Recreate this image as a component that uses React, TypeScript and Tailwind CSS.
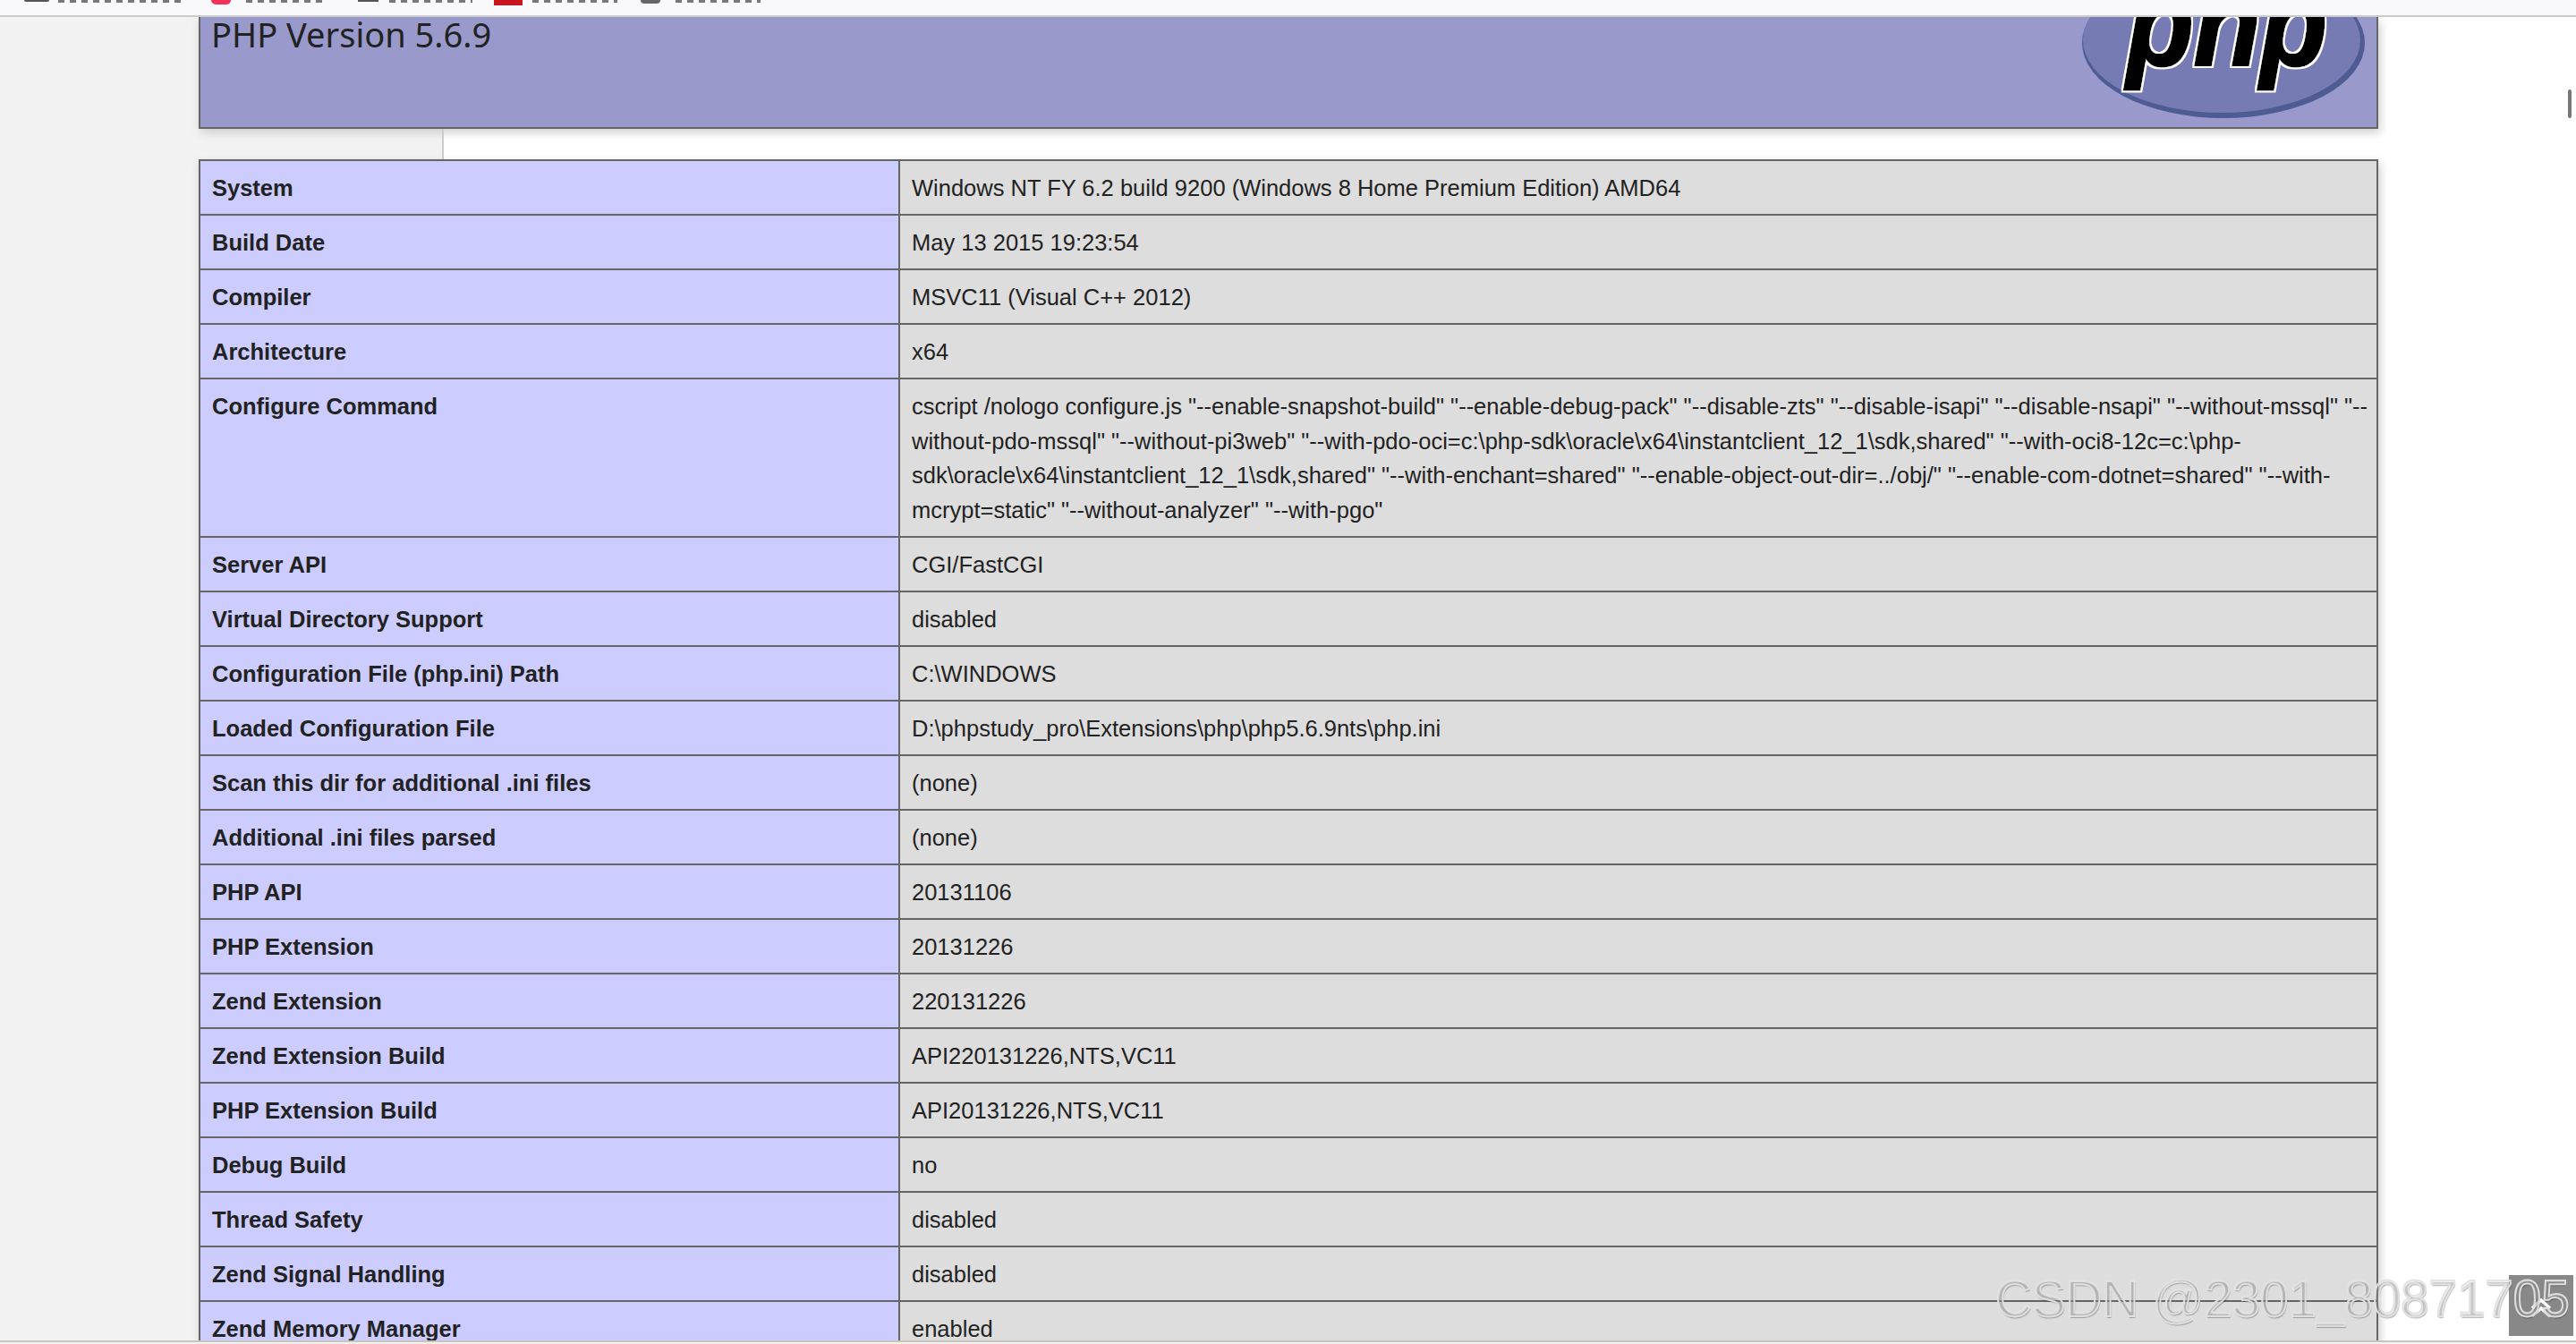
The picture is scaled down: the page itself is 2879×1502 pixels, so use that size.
const rows: [string, string][] = [
  ['System', 'Windows NT FY 6.2 build 9200 (Windows 8 Home Premium Edition) AMD64'],
  ['Build Date', 'May 13 2015 19:23:54'],
  ['Compiler', 'MSVC11 (Visual C++ 2012)'],
  ['Architecture', 'x64'],
  [
    'Configure Command',
    'cscript /nologo configure.js "--enable-snapshot-build" "--enable-debug-pack" "--disable-zts" "--disable-isapi" "--disable-nsapi" "--without-mssql" "--without-pdo-mssql" "--without-pi3web" "--with-pdo-oci=c:\\php-sdk\\oracle\\x64\\instantclient_12_1\\sdk,shared" "--with-oci8-12c=c:\\php-sdk\\oracle\\x64\\instantclient_12_1\\sdk,shared" "--with-enchant=shared" "--enable-object-out-dir=../obj/" "--enable-com-dotnet=shared" "--with-mcrypt=static" "--without-analyzer" "--with-pgo"',
  ],
  ['Server API', 'CGI/FastCGI'],
  ['Virtual Directory Support', 'disabled'],
  ['Configuration File (php.ini) Path', 'C:\\WINDOWS'],
  ['Loaded Configuration File', 'D:\\phpstudy_pro\\Extensions\\php\\php5.6.9nts\\php.ini'],
  ['Scan this dir for additional .ini files', '(none)'],
  ['Additional .ini files parsed', '(none)'],
  ['PHP API', '20131106'],
  ['PHP Extension', '20131226'],
  ['Zend Extension', '220131226'],
  ['Zend Extension Build', 'API220131226,NTS,VC11'],
  ['PHP Extension Build', 'API20131226,NTS,VC11'],
  ['Debug Build', 'no'],
  ['Thread Safety', 'disabled'],
  ['Zend Signal Handling', 'disabled'],
  ['Zend Memory Manager', 'enabled'],
]

function PhpLogo() {
  return (
    <svg className="absolute right-[13px] top-[-55px]" width="316" height="168" viewBox="0 0 316 168">
      <defs>
        <filter id="php-outline" x="-10%" y="-10%" width="120%" height="120%">
          <feMorphology in="SourceAlpha" operator="dilate" radius="2" result="grown" />
          <feFlood floodColor="#fff" />
          <feComposite in2="grown" operator="in" result="edge" />
          <feMerge>
            <feMergeNode in="edge" />
            <feMergeNode in="SourceGraphic" />
          </feMerge>
        </filter>
      </defs>
      <ellipse cx="158" cy="84" rx="158" ry="84" fill="#4f5b93" />
      <ellipse cx="156" cy="81" rx="155" ry="81" fill="#777bb3" />
      <text
        x="50"
        y="109"
        textLength="224"
        lengthAdjust="spacingAndGlyphs"
        fontFamily="'Liberation Sans', sans-serif"
        fontSize="132"
        fontWeight="700"
        fontStyle="italic"
        fill="#000"
        stroke="#000"
        strokeWidth="3"
        filter="url(#php-outline)"
      >
        php
      </text>
    </svg>
  )
}

// bottom edge of the bookmark bar, the rest is cropped out of the window
function BookmarkBar() {
  const fragment =
    'h-[3px] bg-[repeating-linear-gradient(90deg,#777_0,#777_7px,transparent_7px,transparent_13px)]'
  return (
    <div className="flex h-[19px] shrink-0 items-start border-b-2 border-[#ccc] bg-[#f9f9fb]">
      <div className="ml-[27px] h-[2px] w-[28px] rounded-b-sm bg-[#555]" />
      <div className={`ml-[10px] w-[143px] ${fragment}`} />
      <div className="ml-[28px] h-[5px] w-[22px] rounded-b-full bg-[#f5305a]" />
      <div className={`ml-[17px] w-[90px] ${fragment}`} />
      <div className="ml-[35px] h-[2px] w-[23px] bg-[#555]" />
      <div className={`ml-[12px] w-[93px] ${fragment}`} />
      <div className="ml-[24px] h-[6px] w-[32px] bg-[#c8161e]" />
      <div className={`ml-[11px] w-[95px] ${fragment}`} />
      <div className="ml-[26px] h-[4px] w-[22px] rounded-b-full bg-[#666]" />
      <div className={`ml-[17px] w-[95px] ${fragment}`} />
    </div>
  )
}

export default function App() {
  return (
    <div className="relative flex h-[1502px] w-[2879px] flex-col overflow-hidden bg-white font-['Liberation_Sans',sans-serif] text-[25.5px] leading-[38px] text-[#222]">
      <BookmarkBar />

      <div className="relative min-h-0 flex-1 overflow-hidden">
        <div className="absolute inset-y-0 left-0 w-[496px] border-r-2 border-[#ccc] bg-[#f2f2f2]" />
        <div className="relative ml-[222px] w-[2436px]">
          <div className="relative h-[125px] overflow-hidden border-x-2 border-b-2 border-[#666] bg-[#9999cc] pl-[12px] font-['Noto_Sans',sans-serif] text-[38px] leading-[38px] shadow-[2px_4px_10px_#ccc]">
            PHP Version 5.6.9
            <PhpLogo />
          </div>
          <div className="h-[34px]" />
          <div className="grid grid-cols-[782px_1fr] border-t-2 border-[#666] shadow-[2px_4px_10px_#ccc]">
            {rows.map(([label, value]) => (
              <div key={label} className="col-span-2 grid grid-cols-subgrid border-x-2 border-b-2 border-[#666]">
                <div className="bg-[#ccccff] pb-[10px] pl-[13px] pr-[12px] pt-[11px] font-bold">{label}</div>
                <div
                  className={`border-l-2 border-[#666] bg-[#dddddd] pb-[10px] pl-[13px] pr-[6px] pt-[11px] ${
                    label === 'Configure Command' ? 'leading-[38.5px]' : ''
                  }`}
                >
                  {value}
                </div>
              </div>
            ))}
          </div>
        </div>
      </div>

      <div className="h-[4px] shrink-0 border-t-2 border-[#c8c4be] bg-[#f5f0ee]" />

      {/* scroll position marker */}
      <div className="absolute left-[2870px] top-[100px] h-[32px] w-[4px] rounded-full bg-[#777]" />

      {/* back to top */}
      <div className="absolute left-[2804px] top-[1425px] flex h-[68px] w-[72px] items-center justify-center bg-[#888]">
        <svg width="24" height="22" viewBox="0 0 24 22" fill="none" stroke="#fff" strokeWidth="3.5" className="mt-[6px]">
          <path d="M2 11 12 2l10 9" />
          <path d="M2 20l10-9 10 9" />
        </svg>
      </div>

      {/* watermark */}
      <div className="absolute left-[2230px] top-[1420px] whitespace-nowrap text-[56.5px] leading-[64px] text-[rgba(230,230,230,0.3)] [-webkit-text-stroke:2px_rgba(226,226,226,0.95)] [text-shadow:1px_2px_1px_rgba(0,0,0,0.28)]">
        CSDN @2301_80871705
      </div>
    </div>
  )
}
